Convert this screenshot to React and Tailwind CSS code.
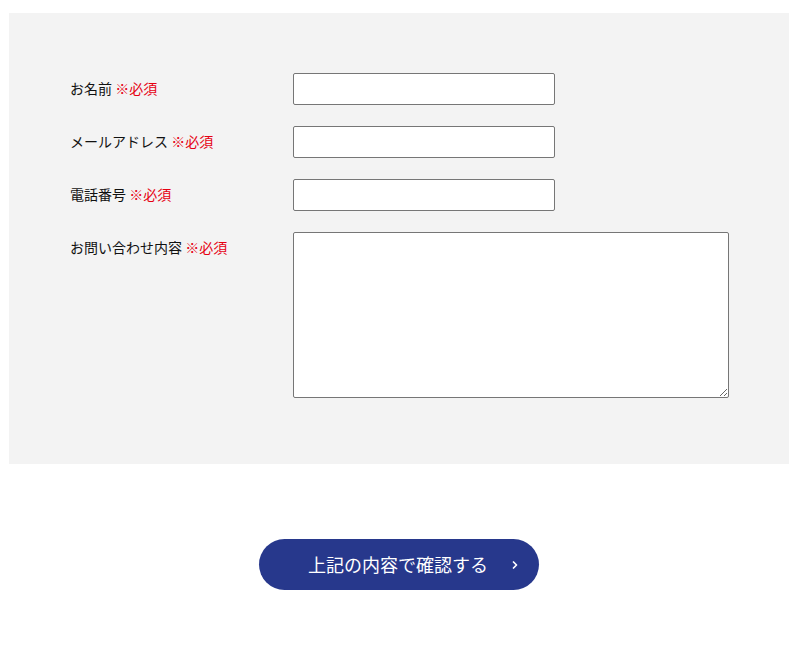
import { ChevronRight } from "lucide-react";

const fields = [
  { label: "お名前", type: "text" },
  { label: "メールアドレス", type: "email" },
  { label: "電話番号", type: "tel" },
];

function Label({ children, className = "" }) {
  return (
    <label className={`w-[223px] shrink-0 text-[14px] text-[#111] ${className}`}>
      {children} <span className="text-[#e60012]">※必須</span>
    </label>
  );
}

export default function App() {
  return (
    <div
      className="min-h-screen bg-white pt-[13px] pl-[9px] pr-[11px]"
      style={{ fontFamily: '"Noto Sans CJK JP", "Noto Sans", sans-serif' }}
    >
      <div className="bg-[#f3f3f3] pt-[60px] pb-[66px] pl-[61px] pr-[60px] flex flex-col gap-[21px]">
        {fields.map((f) => (
          <div key={f.label} className="flex items-center">
            <Label className="-mt-[1px]">{f.label}</Label>
            <input
              type={f.type}
              className="w-[262px] h-[32px] bg-white border border-[#767676] rounded-[2px] px-2 text-sm"
            />
          </div>
        ))}
        <div className="flex items-start">
          <Label className="pt-[5px]">お問い合わせ内容</Label>
          <textarea className="w-[436px] h-[166px] bg-white border border-[#767676] rounded-[2px] p-2 text-sm" />
        </div>
      </div>

      <div className="flex justify-center pt-[75px]">
        <button className="relative w-[280px] h-[51px] rounded-full bg-[#27388c] text-white text-[18px] flex items-center justify-center">
          <span className="-ml-[2px]">上記の内容で確認する</span>
          <ChevronRight className="absolute right-[18px] w-[12px] h-[12px]" strokeWidth={3.5} />
        </button>
      </div>
    </div>
  );
}
